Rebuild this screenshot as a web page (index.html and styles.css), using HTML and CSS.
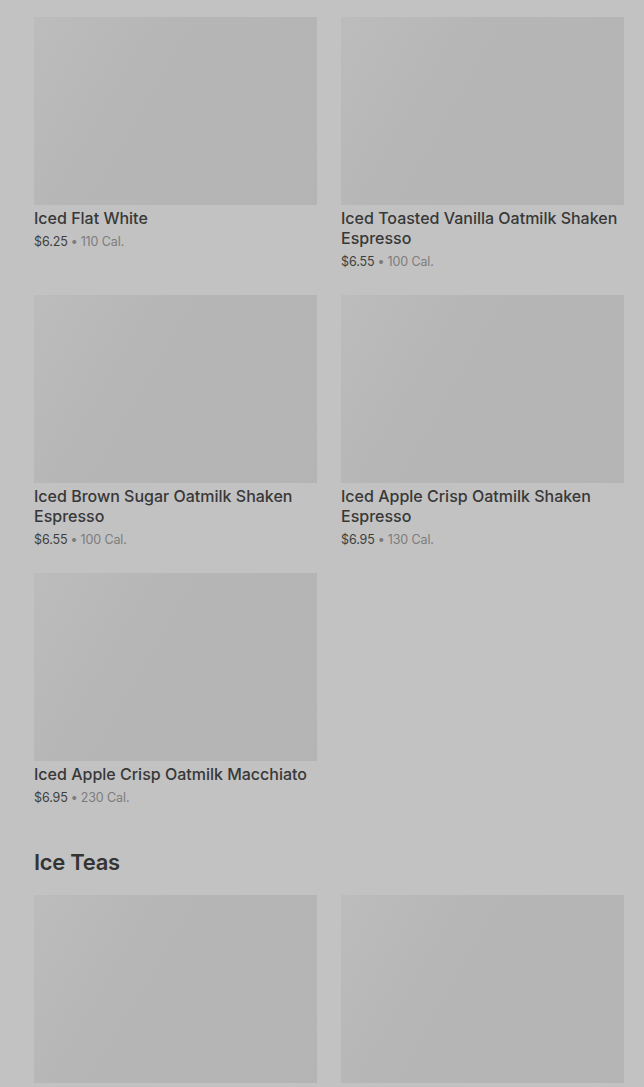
FILE: index.html
```html
<!DOCTYPE html>
<html lang="en">
<head>
<meta charset="utf-8">
<title>Menu</title>
<link rel="stylesheet" href="styles.css">
</head>
<body>
<main class="page">
  <section class="section">
    <div class="grid">
      <article class="card">
        <div class="thumb"></div>
        <h3 class="name">Iced Flat White</h3>
        <p class="meta"><span class="price">$6.25</span><span class="dot">•</span><span class="cal">110 Cal.</span></p>
      </article>
      <article class="card">
        <div class="thumb"></div>
        <h3 class="name">Iced Toasted Vanilla Oatmilk Shaken Espresso</h3>
        <p class="meta"><span class="price">$6.55</span><span class="dot">•</span><span class="cal">100 Cal.</span></p>
      </article>
      <article class="card">
        <div class="thumb"></div>
        <h3 class="name">Iced Brown Sugar Oatmilk Shaken Espresso</h3>
        <p class="meta"><span class="price">$6.55</span><span class="dot">•</span><span class="cal">100 Cal.</span></p>
      </article>
      <article class="card">
        <div class="thumb"></div>
        <h3 class="name">Iced Apple Crisp Oatmilk Shaken Espresso</h3>
        <p class="meta"><span class="price">$6.95</span><span class="dot">•</span><span class="cal">130 Cal.</span></p>
      </article>
      <article class="card">
        <div class="thumb"></div>
        <h3 class="name">Iced Apple Crisp Oatmilk Macchiato</h3>
        <p class="meta"><span class="price">$6.95</span><span class="dot">•</span><span class="cal">230 Cal.</span></p>
      </article>
    </div>
  </section>
  <section class="section">
    <h2 class="heading">Ice Teas</h2>
    <div class="grid">
      <article class="card">
        <div class="thumb"></div>
      </article>
      <article class="card">
        <div class="thumb"></div>
      </article>
    </div>
  </section>
</main>
</body>
</html>
```

FILE: styles.css
```css
html, body {
  margin: 0;
  padding: 0;
  background: #c2c2c2;
  overflow: hidden;
}
body {
  font-family: Inter, "Noto Sans", "Liberation Sans", sans-serif;
  color: #363636;
}
.page {
  padding: 17px 20px 0 34px;
}
.grid {
  display: grid;
  grid-template-columns: 283px 283px;
  column-gap: 24px;
  row-gap: 23px;
}
.card {
  display: flex;
  flex-direction: column;
}
.thumb {
  height: 188px;
  background: linear-gradient(120deg, #bcbcbc 0%, #b6b6b6 35%, #b4b4b4 100%);
}
.name {
  margin: 3px 0 0;
  font-size: 16px;
  line-height: 20px;
  font-weight: 500;
  color: #383838;
}
.meta {
  margin: 4px 0 0;
  height: 20px;
  font-size: 12.5px;
  line-height: 20px;
  color: #3e3e3e;
  letter-spacing: -0.1px;
}
.dot {
  margin: 0 3px;
}
.dot, .cal {
  color: #7c7c7c;
}
.heading {
  margin: 38px 0 17px;
  font-size: 22px;
  line-height: 32px;
  font-weight: 600;
  color: #343434;
  letter-spacing: -0.3px;
}
```
